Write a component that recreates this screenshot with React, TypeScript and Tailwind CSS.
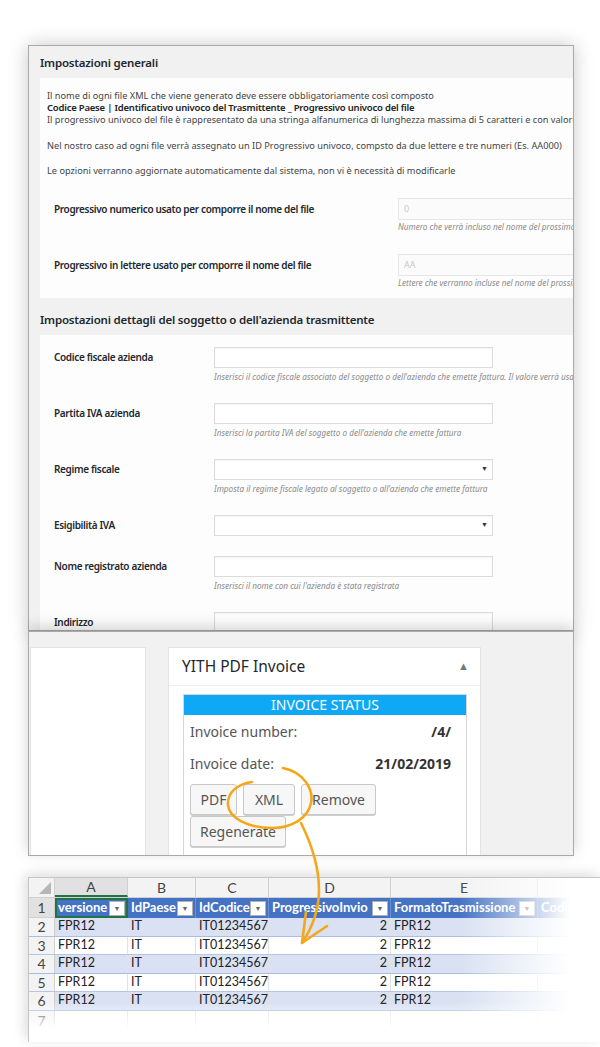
import React from "react";

const WP = "font-['Noto_Sans',sans-serif]";
const XL = "font-['Lato',sans-serif]";

function Field({ select, value }: { select?: boolean; value?: string }) {
  return (
    <div className="relative h-[21px] w-[279px] border border-[#dcdcdc] bg-white shadow-[inset_0_1px_2px_rgba(0,0,0,0.05)]">
      {value && <span className="pl-[5px] text-[9px] leading-[19px] text-[#c8c8c8]">{value}</span>}
      {select && <span className="absolute right-[4px] top-[4px] text-[7px] text-[#333]">▼</span>}
    </div>
  );
}

function SettingRow({ label, help, select }: { label: string; help?: string; select?: boolean }) {
  return (
    <div className="mb-[20px] flex">
      <div className="flex h-[21px] w-[160px] shrink-0 items-center text-[10px] font-semibold tracking-[-0.35px] text-[#23282d]">
        {label}
      </div>
      <div className="shrink-0">
        <Field select={select} />
        {help && (
          <div className="mt-[3px] whitespace-nowrap text-[8.2px] italic leading-[12px] text-[#8a8a8a]">{help}</div>
        )}
      </div>
    </div>
  );
}

function SettingsPanel() {
  return (
    <div className={`${WP} h-[586px] w-[546px] overflow-hidden border border-[#a9a9a9] bg-[#f1f1f1] pl-[11px] shadow-[0_0_18px_rgba(0,0,0,0.22)]`}>
      <div className="flex h-[32px] items-center pt-[1px] text-[11.5px] font-semibold tracking-[-0.2px] text-[#23282d]">
        Impostazioni generali
      </div>
      <div className="h-[220px] whitespace-nowrap bg-[#fdfdfd] pt-[12px] text-[9.2px] leading-[12px] text-[#444]">
        <div className="pl-[7px]">
          <p>Il nome di ogni file XML che viene generato deve essere obbligatoriamente così composto</p>
          <p className="text-[9.5px] font-semibold tracking-[-0.22px] text-[#222]">
            Codice Paese | Identificativo univoco del Trasmittente _ Progressivo univoco del file
          </p>
          <p>Il progressivo univoco del file è rappresentato da una stringa alfanumerica di lunghezza massima di 5 caratteri e con valori ammessi</p>
          <p className="mt-[14px]">Nel nostro caso ad ogni file verrà assegnato un ID Progressivo univoco, compsto da due lettere e tre numeri (Es. AA000)</p>
          <p className="mt-[13px]">Le opzioni verranno aggiornate automaticamente dal sistema, non vi è necessità di modificarle</p>
        </div>
        <div className="pl-[14px]">
          {[
            ["Progressivo numerico usato per comporre il nome del file", "0", "Numero che verrà incluso nel nome del prossimo file generato"],
            ["Progressivo in lettere usato per comporre il nome del file", "AA", "Lettere che verranno incluse nel nome del prossimo file generato"],
          ].map(([label, val, help]) => (
            <div key={label} className="mt-[21px] flex">
              <div className="flex h-[22px] w-[344px] shrink-0 items-center text-[10px] font-semibold tracking-[-0.35px] text-[#23282d]">
                {label}
              </div>
              <div className="shrink-0">
                <div className="h-[22px] w-[220px] border border-[#e6e6e6] bg-[#fbfbfb] pl-[5px] text-[9px] leading-[20px] text-[#c8c8c8]">{val}</div>
                <div className="mt-[1px] text-[8.2px] italic leading-[12px] text-[#8a8a8a]">{help}</div>
              </div>
            </div>
          ))}
        </div>
      </div>
      <div className="flex h-[37px] items-center pt-[6px] text-[11.5px] font-semibold tracking-[-0.2px] text-[#23282d]">
        Impostazioni dettagli del soggetto o dell'azienda trasmittente
      </div>
      <div className="h-[300px] bg-[#fdfdfd] pl-[14px] pt-[12px]">
        <SettingRow label="Codice fiscale azienda" help="Inserisci il codice fiscale associato del soggetto o dell'azienda che emette fattura. Il valore verrà usato" />
        <SettingRow label="Partita IVA azienda" help="Inserisci la partita IVA del soggetto o dell'azienda che emette fattura" />
        <SettingRow label="Regime fiscale" select help="Imposta il regime fiscale legato al soggetto o all'azienda che emette fattura" />
        <SettingRow label="Esigibilità IVA" select />
        <SettingRow label="Nome registrato azienda" help="Inserisci il nome con cui l'azienda è stata registrata" />
        <SettingRow label="Indirizzo" />
      </div>
    </div>
  );
}

function WpButton({ label, w }: { label: string; w: string }) {
  return (
    <div className={`${w} flex h-[31px] items-center justify-center rounded-[3px] border border-[#c8c8c8] bg-[#f7f7f7] text-[14px] text-[#555] shadow-[0_1px_0_#cfcfcf]`}>
      {label}
    </div>
  );
}

function MetaboxPanel() {
  return (
    <div className={`${WP} relative z-10 flex h-[225px] w-[546px] overflow-hidden border border-[#a9a9a9] bg-[#f1f1f1] pt-[15px] shadow-[0_-4px_14px_rgba(0,0,0,0.18)]`}>
      <div className="ml-[1px] h-[240px] w-[116px] shrink-0 border border-[#e3e3e3] bg-white" />
      <div className="ml-[22px] h-[240px] w-[313px] shrink-0 border border-[#e3e3e3] bg-white">
        <div className="flex h-[38px] items-center justify-between border-b border-[#eeeeee] pl-[13px] pr-[11px]">
          <span className="text-[15.5px] text-[#23282d]">YITH PDF Invoice</span>
          <span className="text-[11px] text-[#72777c]">▲</span>
        </div>
        <div className="ml-[14px] mt-[8px] h-[170px] w-[284px] border border-[#d6d6d6]">
          <div className="h-[20px] bg-[#0ea8f5] text-center text-[14px] leading-[20px] text-white">INVOICE STATUS</div>
          <div className="flex h-[32px] items-center justify-between pl-[6px] pr-[15px] text-[14px] text-[#555]">
            <span>Invoice number:</span>
            <span className="font-bold text-[#333]">/4/</span>
          </div>
          <div className="flex h-[32px] items-center justify-between pl-[6px] pr-[15px] text-[14px] text-[#555]">
            <span>Invoice date:</span>
            <span className="font-bold text-[#333]">21/02/2019</span>
          </div>
          <div className="mt-[5px] flex flex-wrap gap-x-[6px] gap-y-[1px] pl-[6px]">
            <WpButton label="PDF" w="w-[47px]" />
            <WpButton label="XML" w="w-[52px]" />
            <WpButton label="Remove" w="w-[75px]" />
            <WpButton label="Regenerate" w="w-[96px]" />
          </div>
        </div>
      </div>
    </div>
  );
}

const COLS = [
  { letter: "A", w: "w-[73px]", head: "versione" },
  { letter: "B", w: "w-[68px]", head: "IdPaese" },
  { letter: "C", w: "w-[73px]", head: "IdCodice" },
  { letter: "D", w: "w-[122px]", head: "ProgressivoInvio" },
  { letter: "E", w: "w-[147px]", head: "FormatoTrasmissione" },
  { letter: "F", w: "w-[90px]", head: "CodiceDestinatario" },
];

function FilterBtn() {
  return (
    <span className="ml-auto mr-[2px] flex h-[15px] w-[16px] shrink-0 items-center justify-center border border-[#b0b0b0] bg-white text-[7px] text-[#666]">
      ▼
    </span>
  );
}

function Sheet() {
  const rows = [2, 3, 4, 5, 6];
  return (
    <div className={`${XL} relative h-[165px] w-[572px] overflow-hidden border-l border-t border-[#c6c6c6] bg-white shadow-[-3px_-3px_12px_rgba(0,0,0,0.14)]`}>
      {/* column letters */}
      <div className="flex h-[20px] border-b border-[#d0d0d0] bg-[#f3f3f3] text-[14px] text-[#444]">
        <div className="relative w-[26px] shrink-0 border-r border-[#d0d0d0]">
          <span className="absolute bottom-[3px] right-[3px] h-0 w-0 border-b-[12px] border-l-[12px] border-b-[#b6b6b6] border-l-transparent" />
        </div>
        {COLS.map((c, i) => (
          <div
            key={c.letter}
            className={`${c.w} flex shrink-0 items-center justify-center border-r border-[#d0d0d0] ${i === 0 ? "border-b-2 border-b-[#217346] bg-[#e1e1e1]" : ""}`}
          >
            {c.letter}
          </div>
        ))}
      </div>
      {/* header row */}
      <div className="flex h-[20px]">
        <div className="flex w-[26px] shrink-0 items-center justify-center border-r border-b border-[#d0d0d0] bg-[#e1e1e1] text-[14px] text-[#444]">1</div>
        {COLS.map((c, i) => (
          <div
            key={c.head}
            className={`${c.w} flex shrink-0 items-center overflow-hidden whitespace-nowrap border-r border-[#6d8fd0] bg-[#4472c4] pl-[3px] text-[13px] font-bold text-white ${i === 0 ? "outline-2 -outline-offset-2 outline-[#217346]" : ""}`}
          >
            <span>{c.head}</span>
            <FilterBtn />
          </div>
        ))}
      </div>
      {rows.map((r) => {
        const band = r % 2 === 0;
        return (
          <div key={r} className={`flex h-[18.5px] border-b ${band ? "border-[#a9bde6] bg-[#d9e1f2]" : "border-[#b4c6e7] bg-white"} text-[12.5px] text-[#222]`}>
            <div className="flex w-[26px] shrink-0 items-center justify-center border-r border-[#d0d0d0] bg-[#f3f3f3] text-[14px] text-[#444]">{r}</div>
            <div className="flex w-[73px] shrink-0 items-center border-r border-[#e2e2e2] pl-[3px]">FPR12</div>
            <div className="flex w-[68px] shrink-0 items-center border-r border-[#e2e2e2] pl-[3px]">IT</div>
            <div className="flex w-[73px] shrink-0 items-center border-r border-[#e2e2e2] pl-[3px]">IT01234567</div>
            <div className="flex w-[122px] shrink-0 items-center justify-end border-r border-[#e2e2e2] pr-[3px]">2</div>
            <div className="flex w-[147px] shrink-0 items-center border-r border-[#e2e2e2] pl-[3px]">FPR12</div>
            <div className="w-[90px] shrink-0" />
          </div>
        );
      })}
      <div className="flex h-[19px] text-[14px] text-[#444]">
        <div className="flex w-[26px] shrink-0 items-center justify-center border-r border-[#d0d0d0] bg-[#f3f3f3]">7</div>
        {COLS.map((c) => (
          <div key={c.letter} className={`${c.w} shrink-0 border-r border-[#e2e2e2]`} />
        ))}
      </div>
      {/* fades */}
      <div className="pointer-events-none absolute bottom-0 left-[430px] top-0 w-[142px] bg-[linear-gradient(to_right,rgba(255,255,255,0),#fff_78%)]" />
      <div className="pointer-events-none absolute bottom-0 left-0 right-0 h-[40px] bg-[linear-gradient(to_bottom,rgba(255,255,255,0),#fff_70%)]" />
    </div>
  );
}

function Arrow() {
  return (
    <svg className="pointer-events-none absolute left-0 top-0 z-20" width="600" height="1047" viewBox="0 0 600 1047" fill="none">
      <g stroke="#f5a71b" strokeWidth="2.6" strokeLinecap="round" strokeLinejoin="round">
        <path d="M283 768 C303 772 314 789 311 803 C308 818 292 828 272 828 C248 828 229 818 228 805 C227 792 238 784 252 782" />
        <path d="M301 823 C312 845 319 870 319 890 C319 910 312 928 302 943" />
        <path d="M306 912 L302 943 L327 926" />
      </g>
    </svg>
  );
}

export default function App() {
  return (
    <div className="relative h-[1047px] w-[600px] overflow-hidden bg-white">
      <div className="pl-[28px] pt-[45px]">
        <SettingsPanel />
        <MetaboxPanel />
        <div className="h-[21px]" />
        <Sheet />
      </div>
      <Arrow />
    </div>
  );
}
